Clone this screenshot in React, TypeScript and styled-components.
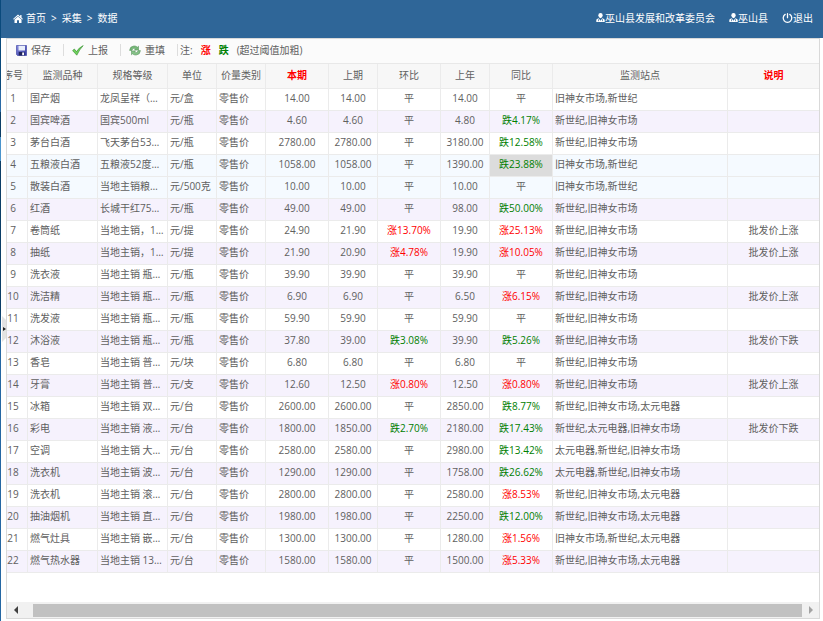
import React from "react";
import styled, { createGlobalStyle, css } from "styled-components";

const Global = createGlobalStyle`
  *, *::before, *::after { box-sizing: border-box; }
  html, body, #root { height: 100%; }
  body {
    margin: 0;
    background: #fff;
    color: #606060;
    font-family: "Open Sans", "Noto Sans CJK SC", sans-serif;
    font-size: 10px;
    line-height: 14px;
  }
  button { font: inherit; color: inherit; background: none; border: 0; padding: 0; cursor: pointer; }
`;

const Page = styled.div`
  display: flex;
  height: 100vh;
  min-height: 480px;
  overflow: hidden;
`;

const MenuEdge = styled.div`
  flex: none;
  width: 1px;
  background: linear-gradient(#0a4a7c 0 90px, #2a6aa6 90px 112px, #0b3d66 112px 137px, #4a94cc 137px 161px, #0b3d66 161px 310px, #2567a3 340px);
`;

const Main = styled.div`
  flex: 1;
  min-width: 0;
  display: flex;
  flex-direction: column;
`;

const TopBar = styled.header`
  flex: none;
  height: 38px;
  display: flex;
  align-items: center;
  justify-content: space-between;
  padding: 0 10px 2px 12px;
  background: #2f6698;
  color: #fff;
`;

const Crumbs = styled.nav`
  display: flex;
  align-items: center;
  gap: 5px;
`;

const TopLink = styled.a`
  display: inline-flex;
  align-items: center;
  gap: 3px;
  color: #fff;
  text-decoration: none;
`;

const Account = styled.div`
  display: flex;
  align-items: center;
  gap: 14px;
  ${TopLink} { gap: 0; }
`;

const Body = styled.div`
  flex: 1;
  min-height: 0;
  display: flex;
  padding: 0 3px 2px 0;
`;

const Splitter = styled.div`
  flex: none;
  width: 5px;
  display: flex;
  align-items: center;
`;

const SplitterHandle = styled.button`
  display: flex;
  width: 5px;
  height: 26px;
`;

const Panel = styled.main`
  flex: 1;
  min-width: 0;
  display: flex;
  flex-direction: column;
  border: 1px solid #d9d9d9;
`;

const Toolbar = styled.div`
  flex: none;
  height: 25px;
  display: flex;
  align-items: center;
  padding: 0 0 2px 9px;
  background: #fbfbfb;
  border-bottom: 1px solid #e8e8e8;
`;

const ToolButton = styled.button`
  display: inline-flex;
  align-items: center;
  gap: 4px;
`;

const Divider = styled.span`
  width: 1px;
  height: 12px;
  margin: 0 8px 0 12px;
  background: #ddd;
`;

const Note = styled.span`
  display: inline-flex;
  align-items: center;
  gap: 8px;
  margin-left: -6px;
`;

const Mark = styled.b<{ $up?: boolean }>`
  color: ${(p) => (p.$up ? "#f00" : "#008000")};
`;

const GridView = styled.div`
  flex: 1;
  min-height: 0;
  overflow: hidden;
`;

const Table = styled.table`
  width: calc(100% + 8px);
  margin-left: -8px;
  border-collapse: separate;
  border-spacing: 0;
  table-layout: fixed;
`;

const Col = styled.col<{ $w?: number }>`
  ${(p) => p.$w && css`width: ${p.$w}px;`}
`;

const HeadCell = styled.th<{ $strong?: boolean }>`
  height: 25px;
  padding: 0 0 2px;
  background: #f7f7f7;
  border-right: 1px solid #ebebeb;
  border-bottom: 1px solid #ebebeb;
  font-weight: ${(p) => (p.$strong ? 700 : 400)};
  color: ${(p) => (p.$strong ? "#f00" : "inherit")};
  white-space: nowrap;
  &:last-child { border-right: 0; }
`;

type Tone = "plain" | "stripe" | "hover";
const tones: Record<Tone, string> = { plain: "#fff", stripe: "#f6f2fd", hover: "#f5faff" };

const Row = styled.tr<{ $tone: Tone }>`
  background: ${(p) => tones[p.$tone]};
`;

const Cell = styled.td<{ $center?: boolean; $trend?: string; $active?: boolean }>`
  height: 22px;
  padding: 0 2px 3px;
  border-right: 1px solid #ebebeb;
  border-bottom: 1px solid #ebebeb;
  overflow: hidden;
  white-space: nowrap;
  text-overflow: ellipsis;
  text-align: ${(p) => (p.$center ? "center" : "left")};
  ${(p) => p.$trend === "涨" && css`color: #f00;`}
  ${(p) => p.$trend === "跌" && css`color: #008000;`}
  ${(p) => p.$active && css`background: #dcdcdc;`}
  &:last-child { border-right: 0; }
`;

const ScrollBar = styled.div`
  flex: none;
  height: 16px;
  display: flex;
  align-items: center;
  background: #f1f1f1;
`;

const ScrollButton = styled.button`
  flex: none;
  width: 17px;
  height: 16px;
  display: flex;
  align-items: center;
  justify-content: center;
`;

const ScrollTrack = styled.div`
  flex: 1;
  padding-left: 9px;
`;

const ScrollThumb = styled.div`
  height: 13px;
  background: #c1c1c1;
`;

const HomeIcon = () => (
  <svg width="10" height="9" viewBox="0 0 10 9" fill="#fff" aria-hidden="true">
    <path d="M5 .6 0 4.900l.7.6L5 1.900l4.300 3.600.7-.6L8.500 3.600V1H7.200v1.500z" />
    <path d="M5 2.500 1.500 5.400V9H4V6.300h2V9h2.500V5.400z" />
  </svg>
);

const UserIcon = () => (
  <svg width="9" height="10" viewBox="0 0 9 10" fill="#fff" aria-hidden="true">
    <path d="M4.500 0Q6.700 0 6.700 2.400 6.500 4.700 4.500 5.200 2.500 4.700 2.300 2.400 2.300 0 4.500 0z" />
    <path d="M2.700 5.200 4.500 7.700 6.300 5.200 8 6Q8.700 6.300 8.700 7.200V9H.3V7.200Q.3 6.300 1 6z" />
    <path d="M2.500 6.200v2M6.500 6.200v2" stroke="#2f6698" strokeWidth=".7" fill="none" />
  </svg>
);

const PowerIcon = () => (
  <svg width="11" height="11" viewBox="0 0 11 11" fill="none" stroke="#fff" strokeWidth="1.3" strokeLinecap="round" aria-hidden="true">
    <path d="M3.200 1.400a4.300 4.300 0 1 0 4.600 0M5.500.7v4" />
  </svg>
);

const SaveIcon = () => (
  <svg width="11" height="11" viewBox="0 0 11 11" aria-hidden="true">
    <defs>
      <linearGradient id="disk" x1="0" y1="0" x2="1" y2="1">
        <stop offset="0" stopColor="#8b8fe0" />
        <stop offset="1" stopColor="#2c319c" />
      </linearGradient>
    </defs>
    <path d="M.5.500h10v10H1.500l-1-1z" fill="url(#disk)" stroke="#4449a8" strokeWidth=".7" />
    <path d="M2.500.8h6.500v4.700H2.500z" fill="#e8eefb" />
    <path d="M2.800 7h5.700v3.500H2.800z" fill="#20245e" />
    <path d="M6.200 7.500h1.800v2.800H6.200z" fill="#fff" />
  </svg>
);

const CheckIcon = () => (
  <svg width="12" height="11" viewBox="0 0 12 11" aria-hidden="true">
    <path d="M.6 5.600 2.300 4l2.200 2.600Q7 2.500 11.200.6q-3.700 3.800-6.400 9.600z" fill="#6fd05c" stroke="#2f8a2a" strokeWidth=".6" />
  </svg>
);

const RefreshIcon = () => (
  <svg width="12" height="11" viewBox="0 0 12 11" aria-hidden="true">
    <path d="M.6 5.400Q.8 1.200 5 .9q2.200 0 3.400 1.300l1.100-1v3.900H5.400l1.300-1.300Q3.500 2.400 3 5.400z" fill="#76b878" stroke="#4c8a50" strokeWidth=".5" />
    <path d="M11.400 5.600q-.2 4.200-4.400 4.500-2.200 0-3.400-1.300l-1.100 1V5.900h4.100L5.300 7.200q3.200 1.400 3.700-1.600z" fill="#86c288" stroke="#4c8a50" strokeWidth=".5" />
  </svg>
);

const Arrow = ({ right = false }: { right?: boolean }) => (
  <svg width="4" height="8" viewBox="0 0 4 8" aria-hidden="true">
    {right ? <path d="M0 0v8l4-4z" fill="#a3a3a3" /> : <path d="M4 0v8L0 4z" fill="#404040" />}
  </svg>
);

const columns: { label: string; width?: number; strong?: boolean }[] = [
  { label: "序号", width: 29 },
  { label: "监测品种", width: 70 },
  { label: "规格等级", width: 70 },
  { label: "单位", width: 49 },
  { label: "价量类别", width: 49 },
  { label: "本期", width: 63, strong: true },
  { label: "上期", width: 49 },
  { label: "环比", width: 63 },
  { label: "上年", width: 49 },
  { label: "同比", width: 63 },
  { label: "监测站点", width: 175 },
  { label: "说明", strong: true },
];

const XJ = "新世纪,旧神女市场";
const JX = "旧神女市场,新世纪";

const records: string[][] = [
  ["国产烟", "龙凤呈祥（…", "元/盒", "14.00", "14.00", "平", "14.00", "平", JX, ""],
  ["国宾啤酒", "国宾500ml", "元/瓶", "4.60", "4.60", "平", "4.80", "跌4.17%", XJ, ""],
  ["茅台白酒", "飞天茅台53…", "元/瓶", "2780.00", "2780.00", "平", "3180.00", "跌12.58%", XJ, ""],
  ["五粮液白酒", "五粮液52度…", "元/瓶", "1058.00", "1058.00", "平", "1390.00", "跌23.88%", JX, ""],
  ["散装白酒", "当地主销粮…", "元/500克", "10.00", "10.00", "平", "10.00", "平", JX, ""],
  ["红酒", "长城干红75…", "元/瓶", "49.00", "49.00", "平", "98.00", "跌50.00%", XJ, ""],
  ["卷筒纸", "当地主销，1…", "元/提", "24.90", "21.90", "涨13.70%", "19.90", "涨25.13%", XJ, "批发价上涨"],
  ["抽纸", "当地主销，1…", "元/提", "21.90", "20.90", "涨4.78%", "19.90", "涨10.05%", XJ, "批发价上涨"],
  ["洗衣液", "当地主销 瓶…", "元/瓶", "39.90", "39.90", "平", "39.90", "平", XJ, ""],
  ["洗洁精", "当地主销 瓶…", "元/瓶", "6.90", "6.90", "平", "6.50", "涨6.15%", XJ, "批发价上涨"],
  ["洗发液", "当地主销 瓶…", "元/瓶", "59.90", "59.90", "平", "59.90", "平", XJ, ""],
  ["沐浴液", "当地主销 瓶…", "元/瓶", "37.80", "39.00", "跌3.08%", "39.90", "跌5.26%", XJ, "批发价下跌"],
  ["香皂", "当地主销 普…", "元/块", "6.80", "6.80", "平", "6.80", "平", XJ, ""],
  ["牙膏", "当地主销 普…", "元/支", "12.60", "12.50", "涨0.80%", "12.50", "涨0.80%", XJ, "批发价上涨"],
  ["冰箱", "当地主销 双…", "元/台", "2600.00", "2600.00", "平", "2850.00", "跌8.77%", "新世纪,旧神女市场,太元电器", ""],
  ["彩电", "当地主销 液…", "元/台", "1800.00", "1850.00", "跌2.70%", "2180.00", "跌17.43%", "新世纪,太元电器,旧神女市场", "批发价下跌"],
  ["空调", "当地主销 大…", "元/台", "2580.00", "2580.00", "平", "2980.00", "跌13.42%", "太元电器,新世纪,旧神女市场", ""],
  ["洗衣机", "当地主销 波…", "元/台", "1290.00", "1290.00", "平", "1758.00", "跌26.62%", "太元电器,新世纪,旧神女市场", ""],
  ["洗衣机", "当地主销 滚…", "元/台", "2800.00", "2800.00", "平", "2580.00", "涨8.53%", "新世纪,旧神女市场,太元电器", ""],
  ["抽油烟机", "当地主销 直…", "元/台", "1980.00", "1980.00", "平", "2250.00", "跌12.00%", "新世纪,旧神女市场,太元电器", ""],
  ["燃气灶具", "当地主销 嵌…", "元/台", "1300.00", "1300.00", "平", "1280.00", "涨1.56%", "旧神女市场,新世纪,太元电器", ""],
  ["燃气热水器", "当地主销 13…", "元/台", "1580.00", "1580.00", "平", "1500.00", "涨5.33%", "新世纪,旧神女市场,太元电器", ""],
];

const ACTIVE_ROW = 3;
const ACTIVE_FIELD = 7;

const toneOf = (i: number): Tone => {
  if (i === ACTIVE_ROW || i === ACTIVE_ROW + 1) return "hover";
  return i % 2 ? "stripe" : "plain";
};

export default function App() {
  return (
    <Page>
      <Global />
      <MenuEdge />
      <Main>
        <TopBar>
          <Crumbs aria-label="位置">
            <TopLink href="#home"><HomeIcon />首页</TopLink>
            <span>&gt;</span>
            <TopLink href="#collect">采集</TopLink>
            <span>&gt;</span>
            <TopLink href="#data">数据</TopLink>
          </Crumbs>
          <Account>
            <TopLink href="#org"><UserIcon />巫山县发展和改革委员会</TopLink>
            <TopLink href="#user"><UserIcon />巫山县</TopLink>
            <TopLink href="#logout"><PowerIcon />退出</TopLink>
          </Account>
        </TopBar>
        <Body>
          <Splitter>
            <SplitterHandle type="button" aria-label="展开菜单">
              <svg width="5" height="26" viewBox="0 0 5 26" aria-hidden="true">
                <path d="M1 0 5 4v18l-4 4z" fill="#e3e3e3" />
                <path d="M2 11v4l3-2z" fill="#222" />
              </svg>
            </SplitterHandle>
          </Splitter>
          <Panel>
            <Toolbar>
              <ToolButton type="button"><SaveIcon />保存</ToolButton>
              <Divider />
              <ToolButton type="button"><CheckIcon />上报</ToolButton>
              <Divider />
              <ToolButton type="button"><RefreshIcon />重填</ToolButton>
              <Divider />
              <Note>
                <span>注:</span>
                <Mark $up>涨</Mark>
                <Mark>跌</Mark>
                <span>(超过阈值加粗)</span>
              </Note>
            </Toolbar>
            <GridView>
              <Table>
                <colgroup>
                  {columns.map((c) => <Col key={c.label} $w={c.width} />)}
                </colgroup>
                <thead>
                  <tr>
                    {columns.map((c) => (
                      <HeadCell key={c.label} scope="col" $strong={c.strong}>{c.label}</HeadCell>
                    ))}
                  </tr>
                </thead>
                <tbody>
                  {records.map((r, i) => (
                    <Row key={i} $tone={toneOf(i)}>
                      <Cell $center>{i + 1}</Cell>
                      <Cell>{r[0]}</Cell>
                      <Cell>{r[1]}</Cell>
                      <Cell>{r[2]}</Cell>
                      <Cell>零售价</Cell>
                      {r.slice(3, 8).map((v, k) => (
                        <Cell key={k} $center $trend={v[0]} $active={i === ACTIVE_ROW && k + 3 === ACTIVE_FIELD}>{v}</Cell>
                      ))}
                      <Cell>{r[8]}</Cell>
                      <Cell $center>{r[9]}</Cell>
                    </Row>
                  ))}
                </tbody>
              </Table>
            </GridView>
            <ScrollBar>
              <ScrollButton type="button" aria-label="向左滚动"><Arrow /></ScrollButton>
              <ScrollTrack><ScrollThumb /></ScrollTrack>
              <ScrollButton type="button" aria-label="向右滚动"><Arrow right /></ScrollButton>
            </ScrollBar>
          </Panel>
        </Body>
      </Main>
    </Page>
  );
}
